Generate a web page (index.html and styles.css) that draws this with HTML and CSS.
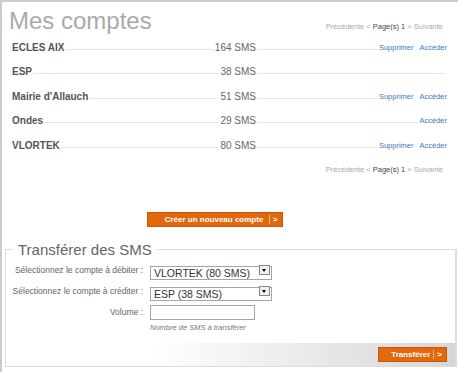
FILE: index.html
```html
<!DOCTYPE html>
<html lang="fr">
<head>
    <meta charset="UTF-8">
    <title>Mes comptes</title>
    <link rel="stylesheet" href="styles.css">
</head>
<body>
    <div class="page">
        <div class="header">
            <h1>Mes comptes</h1>
            <div class="pager">Précédente &lt; <b>Page(s) 1</b> &gt; Suivante</div>
        </div>

        <!-- liste des comptes -->
        <div class="accounts">
            <div class="account">
                <div class="left"><span class="name">ECLES AIX</span><span class="line"></span><span class="count">164 SMS</span></div>
                <div class="right"><span class="line"></span><a href="#">Supprimer</a><a href="#">Accéder</a></div>
            </div>
            <div class="account">
                <div class="left"><span class="name">ESP</span><span class="line"></span><span class="count">38 SMS</span></div>
                <div class="right"><span class="line"></span></div>
            </div>
            <div class="account">
                <div class="left"><span class="name">Mairie d'Allauch</span><span class="line"></span><span class="count">51 SMS</span></div>
                <div class="right"><span class="line"></span><a href="#">Supprimer</a><a href="#">Accéder</a></div>
            </div>
            <div class="account">
                <div class="left"><span class="name">Ondes</span><span class="line"></span><span class="count">29 SMS</span></div>
                <div class="right"><span class="line"></span><a href="#">Accéder</a></div>
            </div>
            <div class="account">
                <div class="left"><span class="name">VLORTEK</span><span class="line"></span><span class="count">80 SMS</span></div>
                <div class="right"><span class="line"></span><a href="#">Supprimer</a><a href="#">Accéder</a></div>
            </div>
        </div>

        <div class="pager bottom">Précédente &lt; <b>Page(s) 1</b> &gt; Suivante</div>

        <div class="create">
            <a href="#" class="btn-orange wide"><span class="label">Créer un nouveau compte</span><span class="arrow">&gt;</span></a>
        </div>

        <!-- transfert -->
        <fieldset class="transfer">
            <legend>Transférer des SMS</legend>
            <div class="form-row">
                <label>Sélectionnez le compte à débiter :</label>
                <div class="select-wrap">
                    <select><option>VLORTEK (80 SMS)</option></select>
                    <span class="drop"></span>
                </div>
            </div>
            <div class="form-row">
                <label>Sélectionnez le compte à créditer :</label>
                <div class="select-wrap">
                    <select><option>ESP (38 SMS)</option></select>
                    <span class="drop"></span>
                </div>
            </div>
            <div class="form-row">
                <label>Volume :</label>
                <input type="text">
            </div>
            <div class="hint">Nombre de SMS à transférer</div>
            <div class="actions">
                <a href="#" class="btn-orange"><span class="label">Transférer</span><span class="arrow">&gt;</span></a>
            </div>
        </fieldset>
    </div>
</body>
</html>
```

FILE: styles.css
```css
body {
    margin: 0;
    font-family: "Liberation Sans", Arial, sans-serif;
    background-color: #ffffff;
}

.page {
    height: 372px;
    box-sizing: border-box;
    border-top: 2px solid #cccccc;
    border-left: 2px solid #cccccc;
}

.header {
    display: flex;
    justify-content: space-between;
    align-items: flex-end;
    padding: 4px 15px 0 7px;
}

h1 {
    margin: 0;
    font-size: 24px;
    line-height: 29px;
    font-weight: normal;
    color: #aaaaaa;
}

.pager {
    font-size: 7.5px;
    color: #aaaaaa;
    padding-bottom: 4px;
}

.pager b {
    font-weight: normal;
    color: #444444;
}

.pager.bottom {
    text-align: right;
    padding: 7px 15px 0 0;
}

.accounts {
    padding: 0 11px 0 10px;
}

.account {
    display: flex;
    align-items: flex-end;
    height: 24.5px;
    box-sizing: border-box;
    padding-bottom: 7px;
    font-size: 10px;
}

.account .left {
    display: flex;
    align-items: flex-end;
    width: 244px;
}

.account .right {
    display: flex;
    align-items: flex-end;
    flex: 1;
}

.name {
    font-weight: bold;
    color: #555555;
}

.count {
    color: #666666;
}

.line {
    flex: 1;
    border-bottom: 1px solid #e4e4e4;
    margin: 0 2px 3px 1px;
}

.account a {
    font-size: 7.5px;
    color: #3b7bbf;
    text-decoration: none;
    margin-left: 6px;
    margin-bottom: 1px;
}

.account a:first-of-type {
    margin-left: 0;
}

.create {
    padding: 34px 0 0 145px;
}

.btn-orange {
    display: inline-flex;
    align-items: center;
    height: 13px;
    background-color: #e2680e;
    border: 1px solid #c9570a;
    color: #ffffff;
    font-size: 8px;
    font-weight: bold;
    text-decoration: none;
}

.btn-orange.wide .label {
    width: 104px;
    padding-left: 14px;
    text-align: center;
}

.btn-orange .label {
    padding: 0 3px 0 12px;
}

.btn-orange .arrow {
    border-left: 1px solid #f5b88a;
    line-height: 9px;
    padding: 0 0 0 3px;
    margin-right: 4px;
}

.transfer {
    margin: 14px 1px 0 3px;
    padding: 2px 0 0 0;
    border: 1px solid #dddddd;
    border-right-width: 2px;
}

legend {
    margin-left: 7px;
    padding: 0 5px;
    font-size: 15px;
    color: #666666;
}

.form-row {
    display: flex;
    align-items: center;
    height: 21px;
}

.form-row label {
    width: 137px;
    text-align: right;
    white-space: nowrap;
    font-size: 8.5px;
    color: #666666;
    margin-right: 7px;
}

.select-wrap {
    position: relative;
    width: 122px;
    height: 14px;
}

select {
    appearance: none;
    -webkit-appearance: none;
    width: 100%;
    height: 14px;
    margin: 0;
    padding: 0 0 0 3px;
    border: 1px solid #a5a5a5;
    border-radius: 0;
    background: #ffffff;
    font-family: "Liberation Sans", Arial, sans-serif;
    font-size: 10.5px;
    line-height: 12px;
    color: #333333;
}

.drop {
    position: absolute;
    top: 2px;
    right: 2px;
    width: 9px;
    height: 8px;
    border: 1px solid #888888;
    background: #f0f0f0;
}

.drop::after {
    content: "";
    position: absolute;
    left: 2px;
    top: 3px;
    border-left: 2.5px solid transparent;
    border-right: 2.5px solid transparent;
    border-top: 3px solid #000000;
}

input {
    width: 105px;
    height: 15px;
    box-sizing: border-box;
    margin: 0;
    border: 1px solid #a5a5a5;
    padding: 0 3px;
}

.hint {
    padding: 0 0 0 144px;
    font-size: 7.5px;
    font-style: italic;
    color: #777777;
}

.actions {
    display: flex;
    justify-content: flex-end;
    align-items: center;
    height: 23px;
    margin-top: 11px;
    padding-right: 8px;
    background: linear-gradient(to right, #ffffff 32%, #d6d6d6);
}
```
